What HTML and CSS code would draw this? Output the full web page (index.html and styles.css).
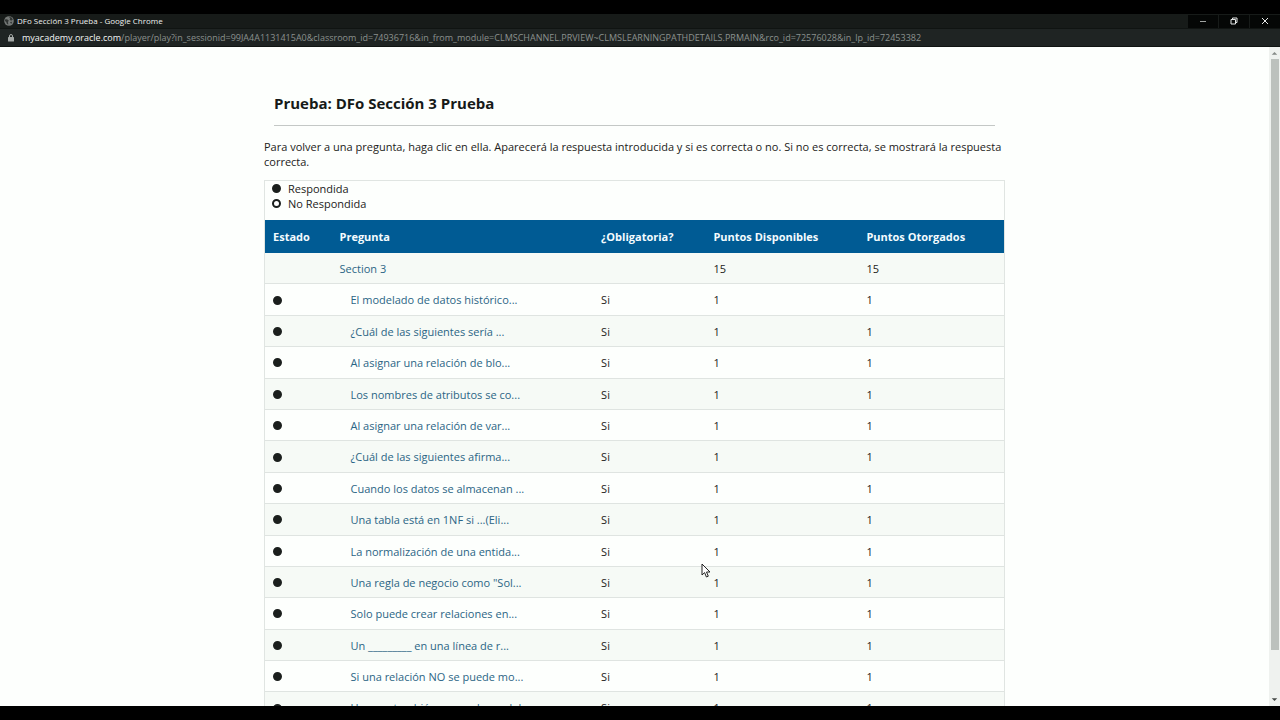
FILE: index.html
```html
<!DOCTYPE html>
<html lang="es">
<head>
<meta charset="utf-8">
<title>DFo Sección 3 Prueba</title>
<link rel="stylesheet" href="styles.css">
</head>
<body>
<header class="titlebar">
  <svg class="globe" viewBox="0 0 10 10" aria-hidden="true"><circle cx="5" cy="5" r="4.8" fill="#747876"/><path d="M1 3.5 3 3.2 4.8 4.6 4 6 4.3 8.6 3 8 2.2 6 1 5ZM5 .8 7.6 1.5 8.8 3.8 7 4.8 5.6 3.6 6.2 2.4ZM6 6 8.2 5.8 7.2 8Z" fill="#303432"/></svg>
  <span class="window-title">DFo Sección 3 Prueba - Google Chrome</span>
  <div class="window-buttons">
    <button type="button" aria-label="Minimizar"><svg viewBox="0 0 8 8"><path d="M1 4.5H7" stroke="#a0a4a2"/></svg></button>
    <button type="button" aria-label="Restaurar"><svg viewBox="0 0 8 8"><path d="M1 2.5H5.5V7H1ZM2.5 2.5V1H7V5.5H5.5" fill="none" stroke="#e4e6e5"/></svg></button>
    <button type="button" aria-label="Cerrar"><svg viewBox="0 0 8 8"><path d="M1 1 7 7M7 1 1 7" stroke="#e8eae9"/></svg></button>
  </div>
</header>
<div class="addressbar">
  <svg class="lock" viewBox="0 0 6 8" aria-hidden="true"><path d="M1.5 3.5V2a1.5 1.5 0 0 1 3 0V3.5" fill="none" stroke="#a4a8a6"/><rect y="3" width="6" height="4.6" rx=".5" fill="#a4a8a6"/></svg>
  <span class="url"><span class="host">myacademy.oracle.com</span>/player/play?in_sessionid=99JA4A1131415A0&amp;classroom_id=74936716&amp;in_from_module=CLMSCHANNEL.PRVIEW~CLMSLEARNINGPATHDETAILS.PRMAIN&amp;rco_id=72576028&amp;in_lp_id=72453382</span>
</div>
<div class="viewport">
  <main class="page">
    <h1>Prueba: DFo Sección 3 Prueba</h1>
    <p class="intro">Para volver a una pregunta, haga clic en ella. Aparecerá la respuesta introducida y si es correcta o no. Si no es correcta, se mostrará la respuesta correcta.</p>
    <section class="panel">
      <ul class="legend">
        <li><span class="dot"></span>Respondida</li>
        <li><span class="dot open"></span>No Respondida</li>
      </ul>
      <table class="questions">
        <colgroup><col class="c-state"><col class="c-question"><col class="c-required"><col class="c-points"><col class="c-awarded"></colgroup>
        <thead><tr><th scope="col">Estado</th><th scope="col">Pregunta</th><th scope="col">¿Obligatoria?</th><th scope="col">Puntos Disponibles</th><th scope="col">Puntos Otorgados</th></tr></thead>
        <tbody>
          <tr><td></td><td><a href="#">Section 3</a></td><td></td><td>15</td><td>15</td></tr>
          <tr><td><span class="dot"></span></td><td class="item"><a href="#">El modelado de datos histórico...</a></td><td>Si</td><td>1</td><td>1</td></tr>
          <tr><td><span class="dot"></span></td><td class="item"><a href="#">¿Cuál de las siguientes sería ...</a></td><td>Si</td><td>1</td><td>1</td></tr>
          <tr><td><span class="dot"></span></td><td class="item"><a href="#">Al asignar una relación de blo...</a></td><td>Si</td><td>1</td><td>1</td></tr>
          <tr><td><span class="dot"></span></td><td class="item"><a href="#">Los nombres de atributos se co...</a></td><td>Si</td><td>1</td><td>1</td></tr>
          <tr><td><span class="dot"></span></td><td class="item"><a href="#">Al asignar una relación de var...</a></td><td>Si</td><td>1</td><td>1</td></tr>
          <tr><td><span class="dot"></span></td><td class="item"><a href="#">¿Cuál de las siguientes afirma...</a></td><td>Si</td><td>1</td><td>1</td></tr>
          <tr><td><span class="dot"></span></td><td class="item"><a href="#">Cuando los datos se almacenan ...</a></td><td>Si</td><td>1</td><td>1</td></tr>
          <tr><td><span class="dot"></span></td><td class="item"><a href="#">Una tabla está en 1NF si ...(Eli...</a></td><td>Si</td><td>1</td><td>1</td></tr>
          <tr><td><span class="dot"></span></td><td class="item"><a href="#">La normalización de una entida...</a></td><td>Si</td><td>1</td><td>1</td></tr>
          <tr><td><span class="dot"></span></td><td class="item"><a href="#">Una regla de negocio como "Sol...</a></td><td>Si</td><td>1</td><td>1</td></tr>
          <tr><td><span class="dot"></span></td><td class="item"><a href="#">Solo puede crear relaciones en...</a></td><td>Si</td><td>1</td><td>1</td></tr>
          <tr><td><span class="dot"></span></td><td class="item"><a href="#">Un _________ en una línea de r...</a></td><td>Si</td><td>1</td><td>1</td></tr>
          <tr><td><span class="dot"></span></td><td class="item"><a href="#">Si una relación NO se puede mo...</a></td><td>Si</td><td>1</td><td>1</td></tr>
          <tr><td><span class="dot"></span></td><td class="item"><a href="#">Un arco también se puede model</a></td><td>Si</td><td>1</td><td>1</td></tr>
        </tbody>
      </table>
    </section>
  </main>
  <div class="scrollbar" aria-hidden="true">
    <svg viewBox="0 0 10 10"><path d="M2.5 6.5 5 4 7.5 6.5Z" fill="#858a87"/></svg>
    <div class="track"><div class="thumb"></div></div>
    <svg viewBox="0 0 10 10"><path d="M2.5 3.5H7.5L5 6Z" fill="#444846"/></svg>
  </div>
</div>
<svg class="cursor" viewBox="0 0 10 16" aria-hidden="true"><path d="M1 1V12L3.6 9.6 5.4 14 7.3 13.2 5.5 9H9Z" fill="#fff" stroke="#222"/></svg>
</body>
</html>
```
FILE: styles.css
```css
* { box-sizing: border-box; }

body {
  margin: 0;
  height: 100vh;
  padding: 14px 0;
  display: flex;
  flex-direction: column;
  overflow: hidden;
  background: #000;
  color: #1c2220;
  font: 11px/15px "Open Sans", "Noto Sans", sans-serif;
}

.titlebar {
  flex: none;
  height: 14px;
  display: flex;
  align-items: center;
  padding-left: 4px;
  gap: 3px;
  background: #171b19;
}

.globe { width: 10px; height: 10px; }

.window-title {
  flex: 1;
  color: #eef0ef;
  font-size: 8px;
  line-height: 14px;
}

.window-buttons { display: flex; gap: 1px; background: #171b19; }

.window-buttons button {
  width: 30px;
  height: 13px;
  padding: 0;
  border: 0;
  display: grid;
  place-items: center;
  background: #050706;
}

.window-buttons svg { width: 8px; height: 8px; }

.addressbar {
  flex: none;
  height: 19px;
  display: flex;
  align-items: center;
  gap: 8px;
  padding-left: 8px;
  background: #1f2423;
  border-top: 1px solid #101412;
  border-bottom: 1px solid #101412;
  color: #8b918e;
  font-size: 9px;
}

.lock { width: 6px; height: 8px; }
.url { white-space: nowrap; }
.host { color: #f2f4f3; }

.viewport {
  flex: 1;
  min-height: 0;
  display: flex;
  overflow: hidden;
  background: #fdfffd;
}

.page {
  width: 741px;
  max-width: 100%;
  margin: 0 auto;
  padding-top: 46px;
}

h1 {
  margin: 0 10px;
  padding-bottom: 12px;
  border-bottom: 1px solid #c4c8c6;
  font-size: 15px;
  line-height: 20px;
  color: #161a18;
}

.intro { margin: 13px 0 11px; }

.panel { border: 1px solid #e0e5e2; }

.legend {
  list-style: none;
  margin: 0;
  padding: 0 7px 9px;
}

.legend li { display: flex; align-items: center; gap: 7px; }

.dot {
  flex: none;
  display: inline-block;
  width: 9px;
  height: 9px;
  border: 2px solid #1b1f1d;
  border-radius: 50%;
  background: #1b1f1d;
}

.dot.open { background: #fff; }

.questions {
  width: 100%;
  table-layout: fixed;
  border-collapse: separate;
  border-spacing: 0;
}

.c-state { width: 9%; }
.c-question { width: 35.4%; }
.c-required { width: 15.2%; }
.c-points { width: 20.7%; }
.c-awarded { width: 19.7%; }

th {
  padding: 9px 8px;
  text-align: left;
  background: #005b94;
  color: #f4fbff;
}

td {
  padding: 8px 8px 7px;
  line-height: 1.4;
  border-bottom: 1px solid #dfe4e1;
}

td .dot { display: block; }
tbody tr:nth-child(odd) { background: #f6faf6; }
.item { padding-left: 19px; }

a { color: #2b6585; text-decoration: none; }

.scrollbar {
  flex: none;
  width: 11px;
  display: flex;
  flex-direction: column;
  background: #eff2ef;
}

.scrollbar svg { width: 11px; height: 12px; }
.track { flex: 1; padding: 0 1px 0 2px; }
.thumb { height: 93%; background: #bcc1bd; }

/* Pointer floats over the page */
.cursor {
  position: absolute;
  left: 701px;
  top: 563px;
  width: 10px;
  height: 16px;
}
```
